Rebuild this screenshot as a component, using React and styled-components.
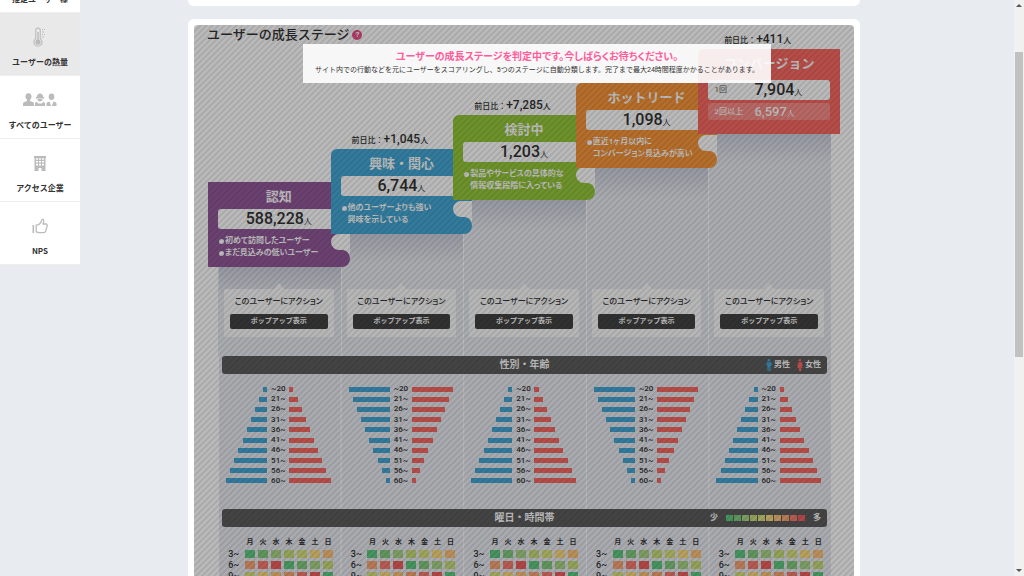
import React from "react"
import styled, { createGlobalStyle, css } from "styled-components"

const GlobalStyle = createGlobalStyle`
  * {
    box-sizing: border-box;
  }

  body {
    margin: 0;
    background: #e8ecf1;
    color: #333;
    font-family: Roboto, "Noto Sans CJK JP", sans-serif;
    font-size: 8px;
  }

  h1, h2, h3, p, ul {
    margin: 0;
    padding: 0;
    list-style: none;
  }

  button {
    border: 0;
    padding: 0;
    font-family: inherit;
    cursor: pointer;
  }
`

const HEAT = [
  "#62cb82", "#86cd82", "#aad68a", "#c9de7c", "#dbe37f",
  "#fbdc80", "#fdc57c", "#fba676", "#fa7d70", "#f2625f",
]

const DAYS = ["月", "火", "水", "木", "金", "土", "日"]
const HOURS = ["3~", "6~", "9~", "12~", "15~", "18~", "21~", "24~"]
const AGES = ["~20", "21~", "26~", "31~", "36~", "41~", "46~", "51~", "56~", "60~"]

const STAGES = [
  { name: "認知", color: "#935a9c", top: 137, count: "588,228", notes: ["初めて訪問したユーザー", "まだ見込みの低いユーザー"] },
  { name: "興味・関心", color: "#45a9d6", top: 104, diff: "+1,045", count: "6,744", notes: ["他のユーザーよりも強い\n興味を示している"] },
  { name: "検討中", color: "#97c93c", top: 70, diff: "+7,285", count: "1,203", notes: ["製品やサービスの具体的な\n情報収集段階に入っている"] },
  { name: "ホットリード", color: "#f8973c", top: 38, count: "1,098", notes: ["直近1ヶ月以内に\nコンバージョン見込みが高い"] },
  { name: "コンバージョン", color: "#fb6a63", top: 4, diff: "+411", count: "7,904", repeat: "6,597", notes: [] },
]

const Page = styled.div`
  display: flex;
  height: 100vh;
  overflow: hidden;
`

const Sidebar = styled.nav`
  width: 80px;
  flex: none;
  margin-top: -50px;
`

const SidebarLink = styled.a`
  display: flex;
  flex-flow: column;
  align-items: center;
  height: 63px;
  padding-top: 14px;
  border-bottom: 1px solid #eee;
  background: ${({ $active }) => ($active ? "#e9e9e9" : "#fff")};
  color: #333;
  font-family: "Noto Sans CJK JP", sans-serif;
  font-weight: bold;
  line-height: 12px;
  text-decoration: none;
  white-space: nowrap;

  svg {
    display: block;
    height: 20px;
    margin-bottom: 9px;
    fill: #bbb;
  }
`

const Main = styled.main`
  flex: 1;
  min-width: 0;
  padding: 0 154px 0 108px;
`

const Card = styled.section`
  padding: 6px;
  border-radius: 6px;
  background: #fff;
`

const PreviousCard = styled.div`
  height: 6px;
  margin-bottom: 13px;
  border-radius: 0 0 6px 6px;
  background: #fff;
`

const Panel = styled.div`
  position: relative;
  display: grid;
  border-radius: 4px;
  overflow: hidden;
  background: #fff;
`

const PanelHeader = styled.header`
  grid-area: 1 / 1;
  display: flex;
  align-items: center;
  align-self: start;
  gap: 3px;
  height: 20px;
  padding-left: 13px;
`

const Title = styled.h1`
  font-size: 13px;
  font-weight: 500;
  line-height: 20px;
`

const HelpButton = styled.button`
  width: 10px;
  height: 10px;
  border-radius: 50%;
  background: #f0508a;
  color: #fff;
  font-size: 8px;
  font-weight: bold;
  line-height: 10px;
`

const Board = styled.div`
  grid-area: 1 / 1;
  padding: 0 23px 0 24px;
`

const Stages = styled.div`
  display: grid;
  grid-template-columns: repeat(5, minmax(0, 1fr));
`

const Stage = styled.article`
  display: flex;
  flex-flow: column;
  padding-top: ${({ $top }) => $top}px;
`

const Diff = styled.p`
  height: 20px;
  margin: 0 13px 0 -11px;
  line-height: 20px;
  font-weight: 500;
  text-align: center;
  white-space: nowrap;

  b {
    font-size: 12px;
    font-weight: 500;
  }
`

const StageCard = styled.div`
  position: relative;
  z-index: 1;
  height: 85px;
  margin: 0 -9px 0 -10px;
  padding: 0 10px;
  border-radius: ${({ $first, $last }) => `${$first ? 0 : 6}px 0 ${$last ? 0 : 8}px 0`};
  background: ${({ $color }) => $color};
  color: #fff;

  > svg {
    position: absolute;
    right: 0;
    top: 52px;
  }
`

const StageName = styled.h2`
  padding: 5px 0 2px;
  font-size: 13px;
  font-weight: bold;
  line-height: 20px;
  text-align: center;
`

const countBox = css`
  border-radius: 3px;
  white-space: nowrap;

  b {
    font-weight: 500;
  }
`

const Count = styled.p`
  ${countBox}
  height: 20px;
  background: #fff;
  color: #333;
  line-height: 20px;
  text-align: center;

  b {
    font-size: 16px;
  }
`

const SplitCount = styled.p`
  ${countBox}
  display: grid;
  grid-template-columns: 40px 1fr;
  height: ${({ $muted }) => ($muted ? 17 : 20)}px;
  margin-top: ${({ $muted }) => ($muted ? 3 : 4)}px;
  padding-left: 6px;
  background: ${({ $muted }) => ($muted ? "rgba(255, 255, 255, 0.25)" : "#fff")};
  color: ${({ $muted }) => ($muted ? "#fff" : "#333")};
  line-height: ${({ $muted }) => ($muted ? 17 : 20)}px;

  > span:first-child {
    font-weight: ${({ $muted }) => ($muted ? "bold" : "normal")};
    opacity: 0.8;
  }

  b {
    font-size: ${({ $muted }) => ($muted ? 13 : 16)}px;
  }
`

const Notes = styled.ul`
  padding: 6px 0 0 1px;
  font-weight: bold;
  line-height: 12px;
  font-feature-settings: "palt";
  white-space: pre;

  li {
    display: flex;
    gap: 1px;
  }

  li::before {
    content: "";
    width: 5px;
    height: 5px;
    margin-top: 4px;
    border-radius: 50%;
    background: #fff;
  }
`

const StageBody = styled.div`
  flex: 1;
  display: flex;
  padding: 22px 7px 19px 5px;
  border-left: 1px solid ${({ $first }) => ($first ? "#e9ebf1" : "#fff")};
  background: linear-gradient(#cdd1dd, #e9ebf1 30px);
`

const Action = styled.div`
  position: relative;
  flex: 1;
  height: 48px;
  margin-top: auto;
  padding: 7px 6px 8px;
  background: #fbfbfb;
  text-align: center;

  &::before {
    content: "";
    position: absolute;
    left: 50%;
    top: -6px;
    margin-left: -5px;
    border: 5px solid transparent;
    border-top: 0;
    border-bottom: 6px solid #fbfbfb;
  }
`

const ActionLabel = styled.h3`
  font-size: 8px;
  font-weight: 500;
  line-height: 12px;
  font-feature-settings: "palt";
  white-space: nowrap;
`

const PopupButton = styled.button`
  display: block;
  width: 100%;
  height: 15px;
  margin-top: 6px;
  border-radius: 2px;
  background: #444;
  color: #fff;
  font-size: 7px;
  font-weight: bold;
  line-height: 15px;
`

const Charts = styled.div`
  background: linear-gradient(90deg, #fff 1px, #e9ebf1 1px) 0 0 / 20% 100%;
`

const ChartRow = styled.div`
  display: grid;
  grid-template-columns: repeat(5, minmax(0, 1fr));
`

const SectionBar = styled.header`
  display: grid;
  grid-template-columns: 1fr auto 1fr;
  align-items: center;
  height: 18px;
  margin: 0 4px;
  padding: 0 6px;
  border-radius: 3px;
  background: #5e5e5e;
  color: #fff;
  font-weight: bold;

  h2 {
    grid-column: 2;
    font-size: 10px;
    line-height: 18px;
  }
`

const Legend = styled.div`
  display: flex;
  align-items: center;
  justify-content: flex-end;
  gap: ${({ $wide }) => ($wide ? 8 : 2)}px;
  line-height: 18px;

  svg:not(:first-child) {
    margin-left: 5px;
  }
`

const Swatches = styled.span`
  display: flex;
  gap: 1px;
`

const Swatch = styled.i`
  width: 7px;
  height: 6px;
  background: ${({ $color }) => $color};
`

const Pyramid = styled.ul`
  display: flex;
  flex-flow: column;
  justify-content: space-between;
  height: 102px;
  margin: 10px 10px 23px 8px;
`

const PyramidRow = styled.li`
  display: grid;
  grid-template-columns: 1fr 22px 1fr;
  align-items: center;
  height: 10px;
  font-size: 8px;
  font-weight: 500;
  line-height: 10px;
  text-align: center;
`

const Bar = styled.i`
  height: 5px;
  justify-self: ${({ $male }) => ($male ? "end" : "start")};
  background: ${({ $male }) => ($male ? "#45a9d6" : "#fb6a63")};
`

const HeatTable = styled.table`
  margin: 7px auto;
  border-spacing: 3px;
  line-height: 8px;

  th {
    width: 10px;
    height: 8px;
    padding: 0;
    font-size: 9px;
    font-weight: 500;
    white-space: nowrap;
  }

  thead th {
    height: 10px;
    font-size: 7px;
    font-weight: bold;
    line-height: 10px;
  }

  th:first-child {
    width: 12px;
  }
`

const HeatCell = styled.td`
  height: 8px;
  padding: 0;
  background: ${({ $color }) => $color};
`

const Overlay = styled.div`
  position: absolute;
  inset: 0;
  z-index: 2;
  background:
    linear-gradient(135deg, rgba(0, 0, 0, 0.08) 25%, transparent 25% 50%, rgba(0, 0, 0, 0.08) 50% 75%, transparent 75%) 0 0 / 6px 6px,
    rgba(0, 0, 0, 0.27);
`

const Notice = styled.div`
  position: absolute;
  z-index: 3;
  top: 19px;
  left: 109px;
  height: 39px;
  padding: 5px 12px 0;
  background: rgba(255, 255, 255, 0.9);
  text-align: center;
  white-space: nowrap;

  strong {
    display: block;
    color: #ff5c9a;
    font-size: 10px;
    line-height: 15px;
    font-feature-settings: "palt";
  }

  p {
    font-size: 7px;
    line-height: 12px;
  }
`

const Scrollbar = styled.div`
  display: flex;
  flex-flow: column;
  align-items: center;
  width: 10px;
  flex: none;
  padding: 3px 0;
  background: #f1f1f1;

  svg {
    fill: #555;
  }
`

const Track = styled.div`
  flex: 1;
  width: 8px;
  padding-top: 45px;
`

const Thumb = styled.div`
  height: 59%;
  background: #c1c1c1;
`

const ThermometerIcon = () => (
  <svg width="14" height="20" viewBox="0 0 14 20">
    <path d="M2.2 3.2a2.8 2.8 0 0 1 5.6 0v8.3a4.6 4.6 0 1 1-5.6 0zM3.3 3.2v8.9a3.5 3.5 0 1 0 3.4 0V3.2a1.7 1.7 0 0 0-3.4 0z" />
    <path d="M4.3 5h1.4v7.6a2.7 2.7 0 1 1-1.4 0z" />
    <path d="M9 2h1v1H9zM11 2h1v1h-1zM9 4.5h2v1H9zM9 7h1v1H9zM11 7h1v1h-1zM9 9.5h2v1H9z" />
  </svg>
)

const UsersIcon = () => (
  <svg width="34" height="20" viewBox="0 0 34 20">
    <ellipse cx="5.5" cy="6.6" rx="3" ry="3.400" />
    <path d="M4 9h3v2l2.500 1c1 .4 1.500 1 1.500 1.900V16H0v-2.100c0-.9.500-1.500 1.500-1.900L4 11z" />
    <path d="M14 6.500c.2-2 1.200-3 3-3s2.800 1 3 3l1.300.9v1h-8.600v-1zM14.300 9h5.400c-.3 1.600-1.300 2.500-2.700 2.500S14.600 10.600 14.300 9zM12 16v-2.400c0-.8.500-1.200 2-1.500l1 1.500h4l1-1.500c1.500.3 2 .7 2 1.500V16z" />
    <ellipse cx="28.500" cy="6.800" rx="2.800" ry="3.300" />
    <path d="M23.500 16v-2.200c0-.8.3-1.300 1-1.500l2-.9 1.600 4.600zM33.500 16v-2.200c0-.8-.3-1.300-1-1.500l-2-.9-1.600 4.600z" />
  </svg>
)

const BuildingIcon = () => (
  <svg width="12" height="20" viewBox="0 0 12 20">
    <path
      fillRule="evenodd"
      d="M0 3h12v2h-.5v13H7.500v-3h-3v3H.5V5H0zM2 5.200h2v1.600H2zM5 5.200h2v1.600H5zM8 5.200h2v1.600H8zM2 8h2v1.600H2zM5 8h2v1.600H5zM8 8h2v1.600H8zM2 10.800h2v1.600H2zM5 10.800h2v1.600H5zM8 10.800h2v1.600H8z"
    />
  </svg>
)

const ThumbPath = styled.path`
  fill: none;
  stroke: #bbb;
  stroke-width: 1.3;
  stroke-linejoin: round;
`

const ThumbIcon = () => (
  <svg width="16" height="20" viewBox="0 0 16 20">
    <path d="M.5 9h1.600v8H.5z" />
    <ThumbPath d="M4.200 9.200l2.600-.6c1.400-1 2.600-2.800 3-4.600.3-1 2-.7 2 .8 0 1.200-.4 2.200-.8 3.200h3c1 0 1.400.8 1.200 1.600l-1.500 5.500c-.3 1-1 1.500-2 1.500H7c-1 0-1.800-.5-2.800-.8z" />
  </svg>
)

const ManIcon = () => (
  <svg width="6" height="12" viewBox="0 0 6 12" fill="#45a9d6">
    <circle cx="3" cy="1.300" r="1.300" />
    <path d="M1 3h4l1 3.500-.9.300L4.600 6v6H3.200V8h-.4v4H1.400V6L.9 6.800 0 6.500z" />
  </svg>
)

const WomanIcon = () => (
  <svg width="6" height="12" viewBox="0 0 6 12" fill="#fb6a63">
    <circle cx="3" cy="1.300" r="1.300" />
    <path d="M1.500 3h3L6 6.500 5 7l.5 2H4.200v3H1.800V9H.5L1 7 0 6.500z" />
  </svg>
)

const Pocket = () => (
  <svg width="19" height="28" viewBox="0 0 19 28" fill="#fff">
    <path d="M19 0H8a8 8 0 0 0 0 16h3c5 0 8 4 8 9z" />
  </svg>
)

function Pyramids() {
  return (
    <ChartRow>
      {STAGES.map((stage, col) => (
        <Pyramid key={stage.name}>
          {AGES.map((age, i) => {
            const width = `${(col % 2 ? AGES.length - i : i + 1) * 10}%`
            return (
              <PyramidRow key={age}>
                <Bar $male style={{ width }} />
                <span>{age}</span>
                <Bar style={{ width }} />
              </PyramidRow>
            )
          })}
        </Pyramid>
      ))}
    </ChartRow>
  )
}

function HeatMap() {
  return (
    <HeatTable>
      <thead>
        <tr>
          <th></th>
          {DAYS.map(day => <th key={day} scope="col">{day}</th>)}
        </tr>
      </thead>
      <tbody>
        {HOURS.map((hour, row) => (
          <tr key={hour}>
            <th scope="row">{hour}</th>
            {DAYS.map((day, col) => (
              <HeatCell key={day} $color={HEAT[(row * 7 + col) % HEAT.length]} />
            ))}
          </tr>
        ))}
      </tbody>
    </HeatTable>
  )
}

function StageColumn({ stage, first, last }) {
  return (
    <Stage $top={stage.top}>
      <Diff>{stage.diff && <>前日比：<b>{stage.diff}</b>人</>}</Diff>
      <StageCard $color={stage.color} $first={first} $last={last}>
        <StageName>{stage.name}</StageName>
        {stage.repeat ? (
          <>
            <SplitCount><span>1回</span><span><b>{stage.count}</b>人</span></SplitCount>
            <SplitCount $muted><span>2回以上</span><span><b>{stage.repeat}</b>人</span></SplitCount>
          </>
        ) : (
          <Count><b>{stage.count}</b>人</Count>
        )}
        <Notes>
          {stage.notes.map(note => <li key={note}>{note}</li>)}
        </Notes>
        {!last && <Pocket />}
      </StageCard>
      <StageBody $first={first}>
        <Action>
          <ActionLabel>このユーザーにアクション</ActionLabel>
          <PopupButton type="button">ポップアップ表示</PopupButton>
        </Action>
      </StageBody>
    </Stage>
  )
}

function App() {
  return (
    <Page>
      <GlobalStyle />
      <Sidebar>
        <SidebarLink href="#estimated"><svg width="14" height="20" />推定ユーザー様</SidebarLink>
        <SidebarLink href="#heat" $active><ThermometerIcon />ユーザーの熱量</SidebarLink>
        <SidebarLink href="#users"><UsersIcon />すべてのユーザー</SidebarLink>
        <SidebarLink href="#companies"><BuildingIcon />アクセス企業</SidebarLink>
        <SidebarLink href="#nps"><ThumbIcon />NPS</SidebarLink>
      </Sidebar>
      <Main>
        <PreviousCard />
        <Card>
          <Panel>
            <PanelHeader>
              <Title>ユーザーの成長ステージ</Title>
              <HelpButton type="button">?</HelpButton>
            </PanelHeader>
            <Board>
              <Stages>
                {STAGES.map((stage, i) => (
                  <StageColumn
                    key={stage.name}
                    stage={stage}
                    first={i === 0}
                    last={i === STAGES.length - 1}
                  />
                ))}
              </Stages>
              <Charts>
                <SectionBar>
                  <h2>性別・年齢</h2>
                  <Legend><ManIcon />男性<WomanIcon />女性</Legend>
                </SectionBar>
                <Pyramids />
                <SectionBar>
                  <h2>曜日・時間帯</h2>
                  <Legend $wide>
                    少
                    <Swatches>{HEAT.map(color => <Swatch key={color} $color={color} />)}</Swatches>
                    多
                  </Legend>
                </SectionBar>
                <ChartRow>
                  {STAGES.map(stage => <HeatMap key={stage.name} />)}
                </ChartRow>
              </Charts>
            </Board>
            <Overlay />
            <Notice>
              <strong>ユーザーの成長ステージを判定中です。今しばらくお待ちください。</strong>
              <p>サイト内での行動などを元にユーザーをスコアリングし、5つのステージに自動分類します。完了まで最大24時間程度かかることがあります。</p>
            </Notice>
          </Panel>
        </Card>
      </Main>
      <Scrollbar>
        <svg width="6" height="4"><path d="M0 4l3-3 3 3z" /></svg>
        <Track><Thumb /></Track>
        <svg width="6" height="4"><path d="M0 0l3 3 3-3z" /></svg>
      </Scrollbar>
    </Page>
  )
}

export default App
